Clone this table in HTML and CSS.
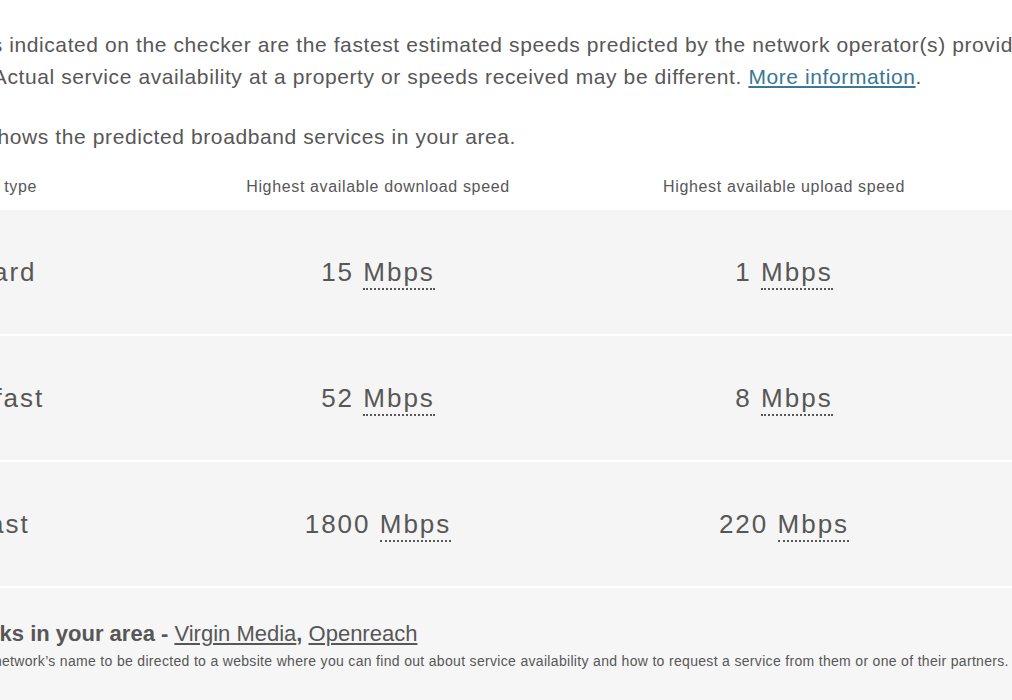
FILE: index.html
```html
<!DOCTYPE html>
<html lang="en">
<head>
<meta charset="utf-8">
<title>Broadband checker</title>
<link rel="stylesheet" href="styles.css">
</head>
<body>
<main class="page">
  <p class="intro">The speeds indicated on the checker are the fastest estimated speeds predicted by the network operator(s) providing services in your area. Actual service availability at a property or speeds received may be different. <a class="more" href="#">More information</a>.</p>
  <p class="intro intro-second">The table shows the predicted broadband services in your area.</p>

  <div class="table">
    <div class="row head">
      <div class="cell label">Broadband type</div>
      <div class="cell num">Highest available download speed</div>
      <div class="cell num">Highest available upload speed</div>
      <div class="cell"></div>
    </div>
    <div class="row data">
      <div class="cell label">Standard</div>
      <div class="cell num">15 <abbr class="unit" title="Megabits per second">Mbps</abbr></div>
      <div class="cell num">1 <abbr class="unit" title="Megabits per second">Mbps</abbr></div>
      <div class="cell"></div>
    </div>
    <div class="row data">
      <div class="cell label">Superfast</div>
      <div class="cell num">52 <abbr class="unit" title="Megabits per second">Mbps</abbr></div>
      <div class="cell num">8 <abbr class="unit" title="Megabits per second">Mbps</abbr></div>
      <div class="cell"></div>
    </div>
    <div class="row data">
      <div class="cell label">Ultrafast</div>
      <div class="cell num">1800 <abbr class="unit" title="Megabits per second">Mbps</abbr></div>
      <div class="cell num">220 <abbr class="unit" title="Megabits per second">Mbps</abbr></div>
      <div class="cell"></div>
    </div>
  </div>

  <section class="networks">
    <h3 class="networks-title">Networks in your area - <a class="net" href="#">Virgin Media</a>, <a class="net" href="#">Openreach</a></h3>
    <p class="networks-note">Click on a network’s name to be directed to a website where you can find out about service availability and how to request a service from them or one of their partners.</p>
  </section>
</main>
</body>
</html>
```
FILE: styles.css
```css
html, body {
  margin: 0;
  padding: 0;
  background: #ffffff;
  overflow: hidden;
}
body {
  width: 1012px;
  height: 700px;
  font-family: "Liberation Sans", Arial, sans-serif;
  color: #575757;
}
.page {
  margin-left: -113px;
  width: 1320px;
  padding-top: 29px;
}
.intro {
  margin: 0;
  font-size: 21px;
  line-height: 32px;
  letter-spacing: 0.6px;
  width: 1290px;
}
.intro-second {
  margin-top: 28px;
}
.more {
  color: #3a7696;
  text-decoration: underline;
}
.table {
  display: flex;
  flex-direction: column;
}
.row {
  display: grid;
  grid-template-columns: 288px 406px 406px 1fr;
  align-items: center;
}
.label {
  padding-left: 28px;
}
.head {
  padding-top: 24px;
  padding-bottom: 13px;
  font-size: 16px;
  line-height: 20px;
  letter-spacing: 0.65px;
}
.data {
  height: 124px;
  background: #f5f5f5;
  border-bottom: 2px solid #ffffff;
  font-size: 26px;
  line-height: 32px;
  letter-spacing: 2px;
}
.num {
  text-align: center;
}
.unit {
  text-decoration: none;
  border-bottom: 2px dotted #575757;
  padding-bottom: 1px;
}
.networks {
  background: #f6f6f6;
  padding: 32px 0 30px 38px;
}
.networks-title {
  margin: 0;
  font-size: 22px;
  line-height: 28px;
  font-weight: bold;
}
.net {
  color: #575757;
  font-weight: normal;
  text-decoration: underline;
}
.networks-note {
  margin: 0;
  font-size: 14px;
  line-height: 26px;
  letter-spacing: 0.32px;
}
```
